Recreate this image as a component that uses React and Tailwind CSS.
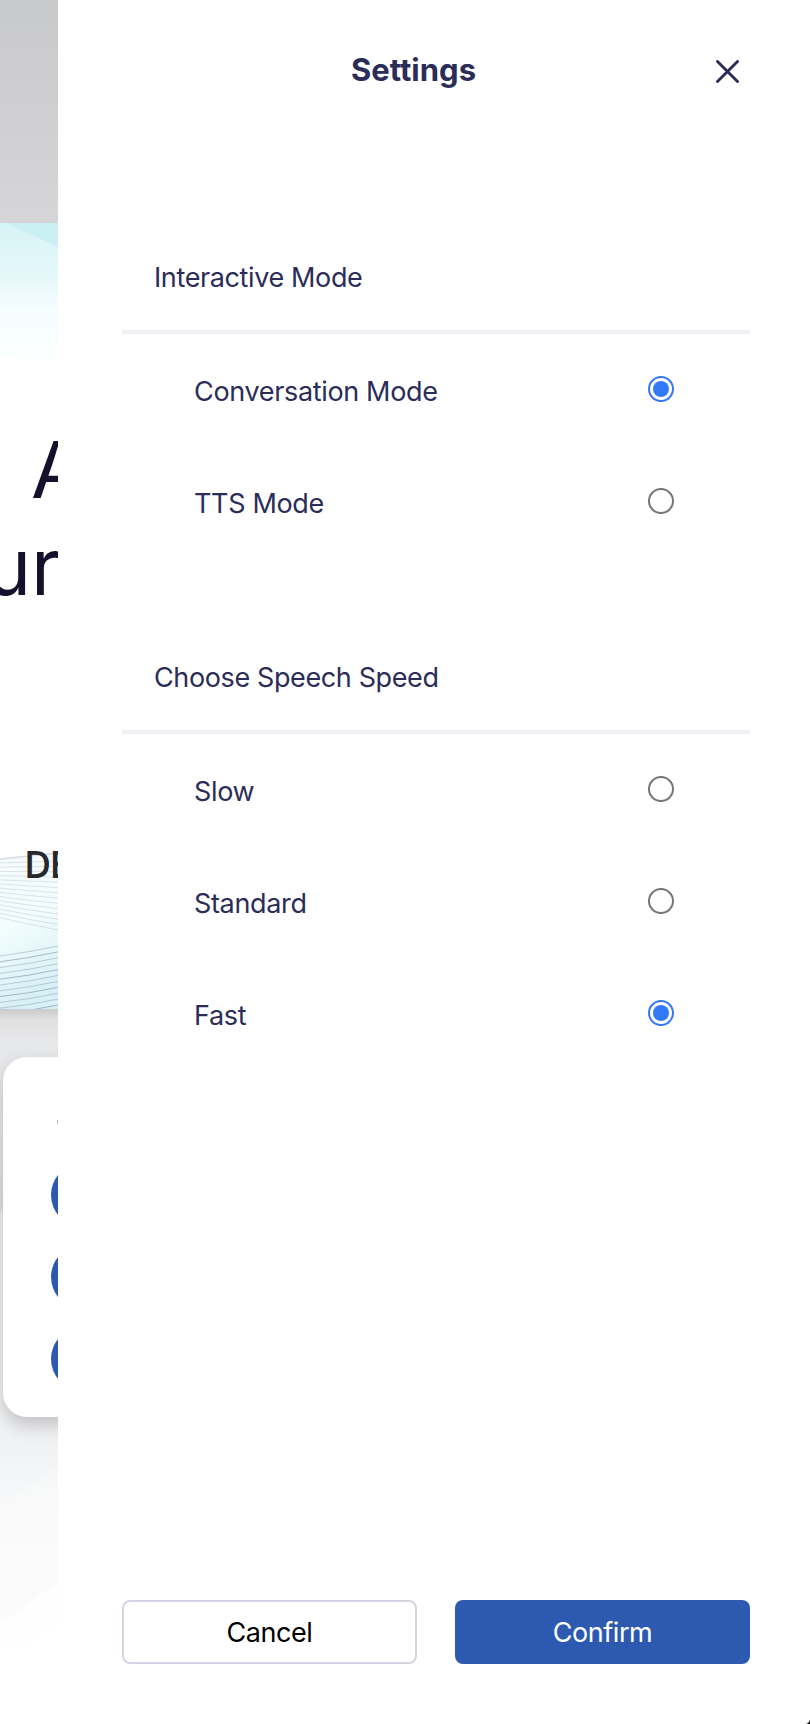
import React, { useState } from "react";

const groups = [
  { id: "mode", title: "Interactive Mode", options: ["Conversation Mode", "TTS Mode"], initial: "Conversation Mode" },
  { id: "speed", title: "Choose Speech Speed", options: ["Slow", "Standard", "Fast"], initial: "Fast" },
];

function Radio({ checked }) {
  return (
    <span
      className={
        checked
          ? "flex size-[26px] items-center justify-center rounded-full border-2 border-[#3478f6] bg-white"
          : "flex size-[26px] items-center justify-center rounded-full border-2 border-[#767676] bg-white"
      }
    >
      {checked && <span className="size-4 rounded-full bg-[#3478f6]" />}
    </span>
  );
}

function OptionGroup({ group }) {
  const [value, setValue] = useState(group.initial);
  return (
    <section>
      <h2 className="flex h-[114px] items-center border-b-4 border-[#f0f1f5] pl-8 pt-[5px] text-[27px] leading-8 tracking-[-0.38px]">
        {group.title}
      </h2>
      <div role="radiogroup">
        {group.options.map((option) => (
          <button
            key={option}
            type="button"
            role="radio"
            aria-checked={value === option}
            onClick={() => setValue(option)}
            className="flex h-28 w-full items-center justify-between pb-0.5 pl-[72px] pr-[76px] text-left text-[27px] leading-8 tracking-[-0.34px]"
          >
            <span className="pt-1.5">{option}</span>
            <Radio checked={value === option} />
          </button>
        ))}
      </div>
    </section>
  );
}

function Waves() {
  const upper = Array.from({ length: 14 }, (_, i) => i);
  const lower = Array.from({ length: 11 }, (_, i) => i);
  return (
    <svg className="block h-[159px] w-[58px]" viewBox="0 0 58 159" fill="none">
      <defs>
        <linearGradient id="wave-fill" x1="0" y1="0" x2="0.2" y2="1">
          <stop offset="0" stopColor="#f4fbfc" />
          <stop offset="0.5" stopColor="#f2fdfd" />
          <stop offset="1" stopColor="#d6f0f5" />
        </linearGradient>
      </defs>
      <path d="M0 9 58 3V159H0Z" fill="url(#wave-fill)" />
      <path d="M0 9 58 3" stroke="#b9b7c8" strokeWidth="1.5" opacity=".5" />
      {upper.map((i) => (
        <path key={i} d={`M0 ${13 + i * 4.2}Q28 ${12 + i * 4.8} 58 ${11 + i * 5.3}`} stroke="#8d90a8" strokeOpacity="0.27" strokeWidth="0.9" />
      ))}
      {lower.map((i) => (
        <path key={i} d={`M0 ${106 + i * 5.8}Q30 ${102 + i * 5.9} 58 ${96 + i * 5.9}`} stroke="#6f7790" strokeOpacity={i % 3 === 1 ? 0.55 : 0.38} strokeWidth="0.9" />
      ))}
    </svg>
  );
}

function Backdrop() {
  return (
    <div className="flex h-full w-[58px] shrink-0 flex-col overflow-hidden bg-white">
      <div className="h-[223px] shrink-0 bg-linear-to-b from-[#c8c9ca] to-[#d6d5d8]" />
      <svg className="block h-[138px] w-[58px] shrink-0" viewBox="0 0 58 138">
        <defs>
          <linearGradient id="sky" x1="0" y1="0" x2="0" y2="1">
            <stop offset="0" stopColor="#d6f3f5" />
            <stop offset="0.4" stopColor="#e6f8fa" />
            <stop offset="0.62" stopColor="#f5fdfe" />
            <stop offset="1" stopColor="#fcffff" />
          </linearGradient>
        </defs>
        <path d="M0 0H58V138L0 132Z" fill="url(#sky)" />
        <path d="M6 0H58V24Z" fill="#caf0f3" />
      </svg>
      <div className="flex h-[489px] shrink-0 flex-col pt-[60px] font-[Inter] text-[78px] leading-[97px] text-[#15102b]">
        <span className="pl-[31px]">A</span>
        <span className="-ml-[15px]">ur</span>
      </div>
      <div className="relative h-[159px] shrink-0">
        <Waves />
        <span className="absolute left-6 top-[-8px] font-['Open_Sans'] text-[37px] font-semibold leading-[44px] tracking-[-1.5px] text-[#26282c]">DE</span>
      </div>
      <div className="relative flex-1 bg-[linear-gradient(180deg,#cacaca_0px,#dfdfe0_10px,#e6e7e9_28px,#e9e9ec_100px,#e0e0e3_198px,#f1f1f2_206px,#f0f1f3_430px,#f7f8f9_490px,#fafafa_560px,#fdfdfd_640px)]">
        <svg className="absolute left-0 top-[408px] h-[307px] w-[58px]" viewBox="0 0 58 307">
          <path d="M0 90 58 50V260L0 300Z" fill="#fbfbfc" opacity=".35" />
          <path d="M0 208 58 165V205L0 247Z" fill="#fff" opacity=".7" />
          <path d="M0 247 58 204V307H0Z" fill="#fff" />
        </svg>
        <div className="relative ml-[3px] mt-12 flex h-[360px] w-[200px] flex-col gap-[18px] rounded-3xl bg-white pl-12 pt-[106px] shadow-[0_8px_18px_rgba(0,0,0,0.2)]">
          <span className="absolute left-[54px] top-[63px] h-1 w-px bg-[#a9b9df]" />
          <span className="size-16 rounded-full bg-[#2d5ab0]" />
          <span className="size-16 rounded-full bg-[#2d5ab0]" />
          <span className="size-16 rounded-full bg-[#2d5ab0]" />
        </div>
      </div>
    </div>
  );
}

export default function App() {
  return (
    <main className="relative flex h-[1724px] w-[810px] overflow-hidden bg-white">
      <Backdrop />
      <div className="flex w-[752px] flex-col bg-white px-[60px] pl-16 pb-[60px] font-[Inter,sans-serif] text-[#2b2d58]">
        <header className="relative flex h-[142px] shrink-0 items-center justify-center pb-0.5 pr-[45px]">
          <h1 className="text-[31px] font-bold leading-9">Settings</h1>
          <button type="button" aria-label="Close" className="absolute right-[11px] top-[60px]">
            <svg className="size-[23px]" viewBox="0 0 23 23" fill="none" stroke="#2b2d58" strokeWidth="2.9" strokeLinecap="round">
              <path d="M1.5 1.5l20 20M21.5 1.5l-20 20" />
            </svg>
          </button>
        </header>
        <div className="flex flex-1 flex-col gap-[62px] pt-[78px]">
          {groups.map((group) => (
            <OptionGroup key={group.id} group={group} />
          ))}
        </div>
        <footer className="grid h-16 grid-cols-2 gap-[38px] text-[27px] tracking-[-0.45px]">
          <button type="button" className="rounded-lg border-2 border-[#d2d4e3] pt-0.5 text-black">Cancel</button>
          <button type="button" className="rounded-lg bg-[#2d5ab0] pt-0.5 text-white">Confirm</button>
        </footer>
      </div>
      <svg className="absolute bottom-0 right-0 size-1" viewBox="0 0 4 4">
        <path d="M4 0Q3 3 0 4H4Z" fill="#111" />
      </svg>
    </main>
  );
}
